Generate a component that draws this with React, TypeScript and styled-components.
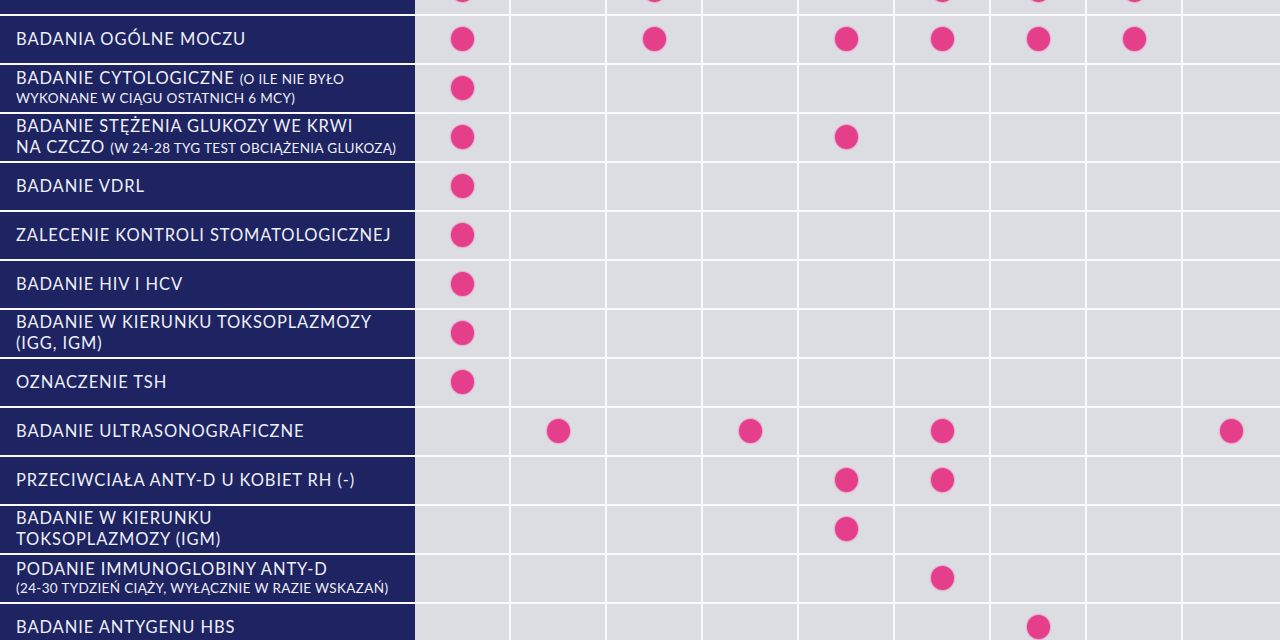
import React from "react";
import styled, { createGlobalStyle } from "styled-components";

const Global = createGlobalStyle`
  html, body { margin: 0; padding: 0; background: #ffffff; }
  body { font-family: Lato, "Open Sans", sans-serif; }
`;

const Viewport = styled.div`
  width: 1280px;
  height: 640px;
  overflow: hidden;
  background: #fafafc;
`;

const Table = styled.div`
  display: flex;
  flex-direction: column;
  gap: 2px;
  margin-top: -33px;
`;

const Row = styled.div`
  display: grid;
  grid-template-columns: 415px 1fr;
  height: 47px;
`;

const Label = styled.div`
  background: #1e2361;
  color: #eef0f8;
  display: flex;
  flex-direction: column;
  justify-content: center;
  padding-left: 16px;
  padding-bottom: 1px;
  font-size: 16.5px;
  line-height: 21px;
  letter-spacing: 0.9px;
  text-transform: uppercase;
  white-space: nowrap;
`;

const Line = styled.div<{ $tight?: boolean }>`
  line-height: ${(p) => (p.$tight ? "18px" : "21px")};
`;

const Small = styled.span`
  font-size: 13.5px;
  letter-spacing: 0.35px;
`;

const Cells = styled.div`
  display: grid;
  grid-template-columns: repeat(8, 94px) 1fr;
  column-gap: 2px;
  background: #fafafc;
`;

const Cell = styled.div`
  background: #dcdde3;
  display: flex;
  align-items: center;
  justify-content: center;
  padding-bottom: 1px;
`;

const Dot = styled.span`
  width: 23px;
  height: 24px;
  border-radius: 50%;
  background: #e53f8b;
  box-shadow: 0 0 1px 1px rgba(240, 120, 170, 0.5);
`;

type RowData = { label: React.ReactNode; dots: number[] };

const rows: RowData[] = [
  { label: <Line>&nbsp;</Line>, dots: [1, 3, 6, 7, 8] },
  { label: <Line>Badania ogólne moczu</Line>, dots: [1, 3, 5, 6, 7, 8] },
  {
    label: (
      <>
        <Line $tight>
          Badanie cytologiczne <Small>(o ile nie było</Small>
        </Line>
        <Line $tight>
          <Small>wykonane w ciągu ostatnich 6 mcy)</Small>
        </Line>
      </>
    ),
    dots: [1],
  },
  {
    label: (
      <>
        <Line>Badanie stężenia glukozy we krwi</Line>
        <Line>
          na czczo <Small>(w 24-28 tyg test obciążenia glukozą)</Small>
        </Line>
      </>
    ),
    dots: [1, 5],
  },
  { label: <Line>Badanie VDRL</Line>, dots: [1] },
  { label: <Line>Zalecenie kontroli stomatologicznej</Line>, dots: [1] },
  { label: <Line>Badanie HIV i HCV</Line>, dots: [1] },
  {
    label: (
      <>
        <Line>Badanie w kierunku toksoplazmozy</Line>
        <Line>(IgG, IgM)</Line>
      </>
    ),
    dots: [1],
  },
  { label: <Line>Oznaczenie TSH</Line>, dots: [1] },
  { label: <Line>Badanie ultrasonograficzne</Line>, dots: [2, 4, 6, 9] },
  { label: <Line>Przeciwciała anty-D u kobiet Rh (-)</Line>, dots: [5, 6] },
  {
    label: (
      <>
        <Line>Badanie w kierunku</Line>
        <Line>toksoplazmozy (IgM)</Line>
      </>
    ),
    dots: [5],
  },
  {
    label: (
      <>
        <Line $tight>Podanie immunoglobiny anty-D</Line>
        <Line $tight>
          <Small>(24-30 tydzień ciąży, wyłącznie w razie wskazań)</Small>
        </Line>
      </>
    ),
    dots: [6],
  },
  { label: <Line>Badanie antygenu HBs</Line>, dots: [7] },
];

export default function App() {
  return (
    <Viewport>
      <Global />
      <Table>
        {rows.map((r, i) => (
          <Row key={i}>
            <Label>{r.label}</Label>
            <Cells>
              {Array.from({ length: 9 }, (_, c) => (
                <Cell key={c}>{r.dots.includes(c + 1) ? <Dot /> : null}</Cell>
              ))}
            </Cells>
          </Row>
        ))}
      </Table>
    </Viewport>
  );
}
